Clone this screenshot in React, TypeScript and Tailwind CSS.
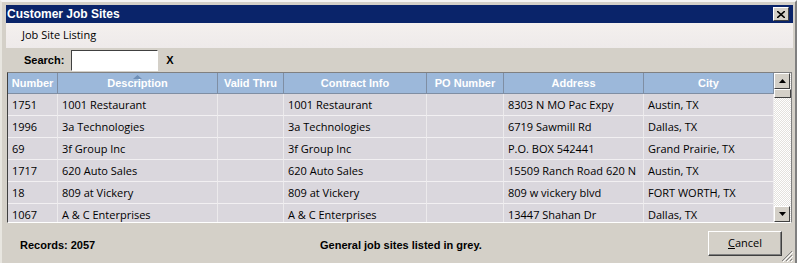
import React from "react";

const COLS = [
  { key: "number", label: "Number", w: "w-[50px]" },
  { key: "desc", label: "Description", w: "w-[160px]" },
  { key: "valid", label: "Valid Thru", w: "w-[66px]" },
  { key: "contract", label: "Contract Info", w: "w-[143px]" },
  { key: "po", label: "PO Number", w: "w-[77px]" },
  { key: "address", label: "Address", w: "w-[140px]" },
  { key: "city", label: "City", w: "w-[130px]" },
];

const ROWS = [
  ["1751", "1001 Restaurant", "", "1001 Restaurant", "", "8303 N MO Pac Expy", "Austin, TX"],
  ["1996", "3a Technologies", "", "3a Technologies", "", "6719 Sawmill Rd", "Dallas, TX"],
  ["69", "3f Group Inc", "", "3f Group Inc", "", "P.O. BOX 542441", "Grand Prairie, TX"],
  ["1717", "620 Auto Sales", "", "620 Auto Sales", "", "15509 Ranch Road 620 N", "Austin, TX"],
  ["18", "809 at Vickery", "", "809 at Vickery", "", "809 w vickery blvd", "FORT WORTH, TX"],
  ["1067", "A & C Enterprises", "", "A & C Enterprises", "", "13447 Shahan Dr", "Dallas, TX"],
];

const bold = "font-['Liberation_Sans',Arial,sans-serif] font-bold";
const body = "font-['Open_Sans','Noto_Sans',sans-serif]";

function ScrollButton({ up }: { up?: boolean }) {
  return (
    <div className="flex h-[16px] w-[16px] items-center justify-center border border-t-white border-l-white border-r-[#404040] border-b-[#404040] bg-[#d4d0c8]">
      <svg width="7" height="4" viewBox="0 0 7 4">
        {up ? <path d="M3.5 0 L7 4 L0 4 Z" fill="#000" /> : <path d="M0 0 L7 0 L3.5 4 Z" fill="#000" />}
      </svg>
    </div>
  );
}

export default function App() {
  return (
    <div className="flex h-[263px] w-[797px] flex-col overflow-hidden border-l-2 border-r-2 border-t-2 border-l-[#e8e6e0] border-r-[#808080] border-t-[#f4f4f4] bg-[#d4d0c8] pl-[4px] pr-[2px] pt-[3px]">
      {/* Title bar */}
      <div className="flex h-[18px] shrink-0 items-center justify-between bg-[#0a246a] pl-[1px] pr-[4px]">
        <span className={`${bold} text-[12px] text-white`}>Customer Job Sites</span>
        <div className="flex h-[14px] w-[16px] items-center justify-center border border-t-white border-l-white border-r-[#404040] border-b-[#404040] bg-[#d4d0c8]">
          <svg width="8" height="7" viewBox="0 0 8 7">
            <path d="M0 0 L8 7 M8 0 L0 7" stroke="#000" strokeWidth="1.6" />
          </svg>
        </div>
      </div>

      {/* Menu strip */}
      <div className="flex h-[25px] shrink-0 items-center bg-gradient-to-b from-[#f4f0ee] to-[#eeeaea] pl-[16px]">
        <span className={`${body} text-[11px] text-black`}>Job Site Listing</span>
      </div>

      {/* Search row */}
      <div className="flex h-[24px] shrink-0 items-center pl-[18px]">
        <span className={`${bold} text-[11px] text-black`}>Search:</span>
        <div className="ml-[7px] h-[21px] w-[87px] border border-t-[#404040] border-l-[#404040] border-r-white border-b-white bg-white" />
        <span className={`${bold} ml-[8px] text-[11px] text-black`}>X</span>
      </div>

      {/* Grid */}
      <div className="mr-[1px] ml-[1px] flex h-[151px] shrink-0 overflow-hidden border border-t-[#808080] border-l-[#404040] border-r-[#808080] border-b-white">
        <div className="flex flex-col">
          <div className="flex h-[21px] shrink-0 bg-[#9cb8da]">
            {COLS.map((c, i) => (
              <div
                key={c.key}
                className={`${c.w} relative flex items-center justify-center border-r border-b border-r-[#7f8ea3] border-b-[#7f8ea3] ${bold} text-[11px] text-white`}
              >
                {i === 1 && (
                  <svg className="absolute top-[2px]" width="9" height="4" viewBox="0 0 9 4">
                    <path d="M4.5 0 L9 4 L0 4 Z" fill="#6f8fb6" />
                  </svg>
                )}
                {c.label}
              </div>
            ))}
          </div>
          {ROWS.map((r, ri) => (
            <div key={ri} className="flex h-[22px] shrink-0 bg-[#dad7dd]">
              {r.map((cell, ci) => (
                <div
                  key={ci}
                  className={`${COLS[ci].w} flex items-center overflow-hidden whitespace-nowrap border-r border-b border-r-[#eceaec] border-b-[#f2f0f2] pl-[4px] pt-[1px] ${body} text-[11px] text-black`}
                >
                  {cell}
                </div>
              ))}
            </div>
          ))}
        </div>
        {/* Scrollbar */}
        <div className="flex w-[17px] flex-col bg-[repeating-conic-gradient(#ffffff_0%_25%,#e4e2de_0%_50%)] bg-[length:2px_2px]">
          <ScrollButton up />
          <div className="h-[9px] border border-t-white border-l-white border-r-[#404040] border-b-[#404040] bg-[#d4d0c8]" />
          <div className="flex-1" />
          <ScrollButton />
        </div>
      </div>

      {/* Footer */}
      <div className="relative flex flex-1 items-center pl-[14px] pr-[11px]">
        <span className={`${bold} w-[300px] pt-[4px] text-[11px] text-black`}>Records: 2057</span>
        <span className={`${bold} pt-[4px] text-[11px] text-black`}>General job sites listed in grey.</span>
        <div className="ml-auto flex h-[25px] w-[74px] items-center justify-center border border-t-white border-l-white border-r-[#404040] border-b-[#404040] bg-[#d4d0c8] shadow-[inset_-1px_-1px_0_#808080]">
          <span className={`${body} text-[11px] text-black`}>
            <span className="underline">C</span>ancel
          </span>
        </div>
        <svg className="absolute right-[0px] bottom-[1px]" width="12" height="12" viewBox="0 0 12 12">
          <path d="M11 1 L1 11 M11 5 L5 11 M11 9 L9 11" stroke="#808080" strokeWidth="1" />
          <path d="M12 2 L2 12 M12 6 L6 12 M12 10 L10 12" stroke="#ffffff" strokeWidth="1" />
        </svg>
      </div>
    </div>
  );
}
